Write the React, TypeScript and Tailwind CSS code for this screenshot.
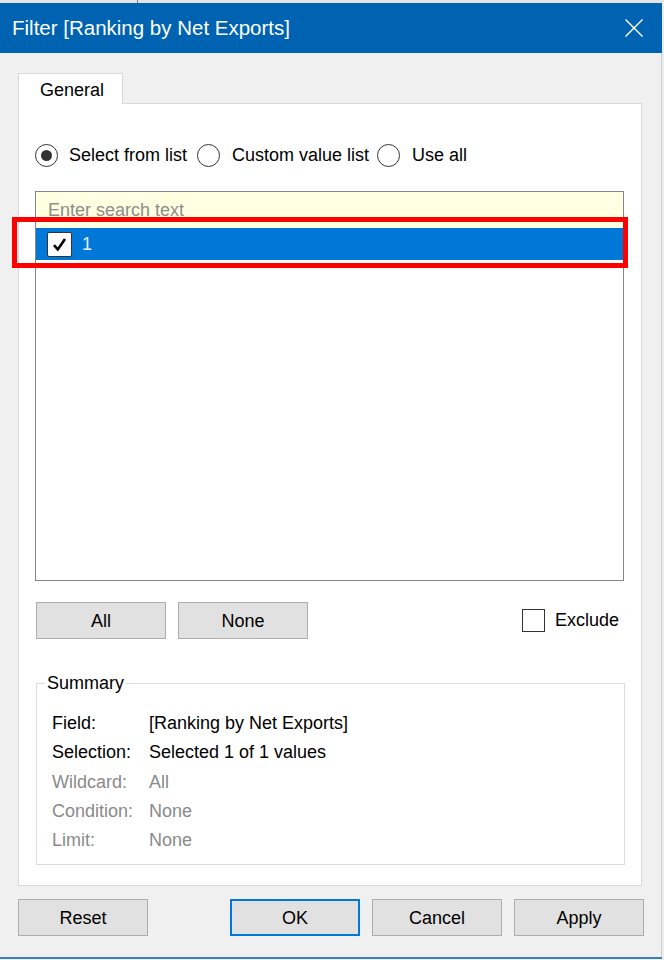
import React from "react";

function Radio({ checked }: { checked?: boolean }) {
  return (
    <div className="w-[23px] h-[23px] rounded-full border border-[#333333] bg-white flex items-center justify-center shrink-0">
      {checked && <div className="w-[11px] h-[11px] rounded-full bg-[#333333]" />}
    </div>
  );
}

function Btn({ label, primary, w = "w-[130px]" }: { label: string; primary?: boolean; w?: string }) {
  return (
    <div
      className={`${w} h-[37px] shrink-0 flex items-center justify-center pt-[1px] bg-[#e1e1e1] text-[18px] text-black ${
        primary ? "border-2 border-[#0078d7]" : "border border-[#adadad]"
      }`}
    >
      {label}
    </div>
  );
}

export default function App() {
  const rows: [string, string, boolean][] = [
    ["Field:", "[Ranking by Net Exports]", true],
    ["Selection:", "Selected 1 of 1 values", true],
    ["Wildcard:", "All", false],
    ["Condition:", "None", false],
    ["Limit:", "None", false],
  ];
  return (
    <div className="w-[664px] h-[960px] bg-[#f0f0f0] flex flex-col relative overflow-hidden font-['Liberation_Sans',Arial,sans-serif]">
      {/* top strip */}
      <div className="h-[3px] bg-[#e4e4e4] flex shrink-0">
        <div className="ml-[137px] w-px h-full bg-[#7a7a7a]" />
      </div>
      <div className="flex flex-row flex-1">
        <div className="w-[662px] flex flex-col">
          {/* Title bar */}
          <div className="h-[50px] bg-[#0063b1] flex items-center justify-between pl-[12px] pr-[19px] shrink-0">
            <span className="text-white text-[20.5px] leading-none">Filter [Ranking by Net Exports]</span>
            <svg width="18" height="18" viewBox="0 0 18 18">
              <line x1="0.5" y1="0.5" x2="17.5" y2="17.5" stroke="white" strokeWidth="1.4" />
              <line x1="17.5" y1="0.5" x2="0.5" y2="17.5" stroke="white" strokeWidth="1.4" />
            </svg>
          </div>
          {/* Body */}
          <div className="h-[904px] border-r border-[#cfcfcf] flex flex-col shrink-0">
            <div className="pt-[20px] pl-[18px]">
              <div className="w-[105px] h-[31px] bg-white border border-b-0 border-[#d9d9d9] relative z-10 -mb-px flex items-center pl-[21px] pt-[2px] text-[18px] text-black">
                General
              </div>
            </div>
            <div className="ml-[18px] w-[624px] h-[783px] border border-[#d9d9d9] bg-white flex flex-col shrink-0">
              {/* Radio row */}
              <div className="mt-[40px] pl-[16px] flex items-center h-[23px] text-[18px] text-black">
                <div className="w-[162px] flex items-center shrink-0">
                  <Radio checked />
                  <span className="ml-[11px] whitespace-nowrap">Select from list</span>
                </div>
                <div className="w-[180px] flex items-center shrink-0">
                  <Radio />
                  <span className="ml-[12px] whitespace-nowrap">Custom value list</span>
                </div>
                <div className="flex items-center">
                  <Radio />
                  <span className="ml-[12px] whitespace-nowrap">Use all</span>
                </div>
              </div>
              {/* List box */}
              <div className="mt-[24px] ml-[16px] w-[589px] h-[390px] border border-[#828790] bg-white flex flex-col shrink-0">
                <div className="h-[36px] bg-[#ffffe1] flex items-center pl-[12px] pt-[1px] text-[18px] text-[#8d8d8d] shrink-0">
                  Enter search text
                </div>
                <div className="h-[32px] bg-[#0078d7] flex items-center pl-[11px] shrink-0">
                  <div className="w-[25px] h-[25px] bg-white border border-[#333333] rounded-[2px] flex items-center justify-center">
                    <svg width="17" height="17" viewBox="0 0 17 17">
                      <path d="M3 9.2 L6.8 13.5 L14 3" fill="none" stroke="black" strokeWidth="2.6" strokeLinejoin="miter" />
                    </svg>
                  </div>
                  <span className="ml-[10px] text-[18px] text-[#e8f3ff]">1</span>
                </div>
              </div>
              {/* All / None / Exclude */}
              <div className="mt-[21px] ml-[17px] flex items-center h-[37px]">
                <Btn label="All" />
                <div className="ml-[12px]">
                  <Btn label="None" />
                </div>
                <div className="ml-[214px] flex items-center">
                  <div className="w-[23px] h-[23px] border border-[#333333] bg-white" />
                  <span className="ml-[10px] text-[18px] text-black">Exclude</span>
                </div>
              </div>
              {/* Summary */}
              <div className="mt-[44px] ml-[17px] w-[589px] h-[182px] border border-[#dcdcdc] relative flex flex-col pt-[25px] pl-[15px] shrink-0">
                <span className="absolute left-[8px] top-[-12px] px-[2px] bg-white text-[18px] leading-[22px] text-black">
                  Summary
                </span>
                {rows.map(([k, v, on]) => (
                  <div
                    key={k}
                    className={`h-[29.25px] flex items-center text-[18px] ${on ? "text-black" : "text-[#8a8a8a]"}`}
                  >
                    <span className="w-[97px] shrink-0">{k}</span>
                    <span>{v}</span>
                  </div>
                ))}
              </div>
            </div>
            {/* Bottom buttons */}
            <div className="mt-[13px] ml-[18px] flex items-center">
              <Btn label="Reset" />
              <div className="ml-[82px] flex gap-[12px]">
                <Btn label="OK" primary />
                <Btn label="Cancel" />
                <Btn label="Apply" />
              </div>
            </div>
          </div>
          <div className="h-[2px] bg-[#3c7fc0] shrink-0" />
        </div>
        <div className="flex-1 bg-[#ececec]" />
      </div>
      {/* Annotation highlight */}
      <div className="absolute left-[12px] top-[217px] w-[616px] h-[51px] border-[5px] border-[#ff0000] pointer-events-none" />
    </div>
  );
}
